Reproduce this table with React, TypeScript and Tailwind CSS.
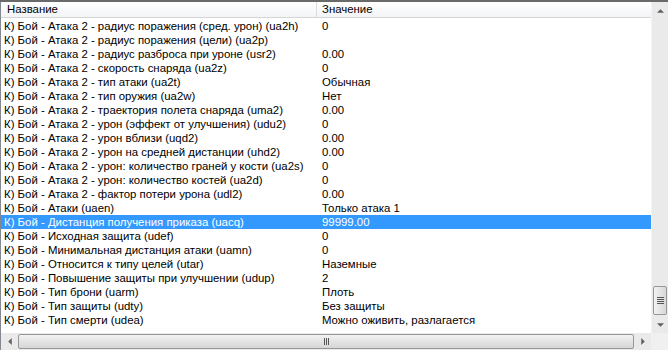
import React from "react";

interface Row {
  name: string;
  value: string;
}

const rows: Row[] = [
  { name: "К) Бой - Атака 2 - радиус поражения (сред. урон) (ua2h)", value: "0" },
  { name: "К) Бой - Атака 2 - радиус поражения (цели) (ua2p)", value: "" },
  { name: "К) Бой - Атака 2 - радиус разброса при уроне (usr2)", value: "0.00" },
  { name: "К) Бой - Атака 2 - скорость снаряда (ua2z)", value: "0" },
  { name: "К) Бой - Атака 2 - тип атаки (ua2t)", value: "Обычная" },
  { name: "К) Бой - Атака 2 - тип оружия (ua2w)", value: "Нет" },
  { name: "К) Бой - Атака 2 - траектория полета снаряда (uma2)", value: "0.00" },
  { name: "К) Бой - Атака 2 - урон (эффект от улучшения) (udu2)", value: "0" },
  { name: "К) Бой - Атака 2 - урон вблизи (uqd2)", value: "0.00" },
  { name: "К) Бой - Атака 2 - урон на средней дистанции (uhd2)", value: "0.00" },
  { name: "К) Бой - Атака 2 - урон: количество граней у кости (ua2s)", value: "0" },
  { name: "К) Бой - Атака 2 - урон: количество костей (ua2d)", value: "0" },
  { name: "К) Бой - Атака 2 - фактор потери урона (udl2)", value: "0.00" },
  { name: "К) Бой - Атаки (uaen)", value: "Только атака 1" },
  { name: "К) Бой - Дистанция получения приказа (uacq)", value: "99999.00" },
  { name: "К) Бой - Исходная защита (udef)", value: "0" },
  { name: "К) Бой - Минимальная дистанция атаки (uamn)", value: "0" },
  { name: "К) Бой - Относится к типу целей (utar)", value: "Наземные" },
  { name: "К) Бой - Повышение защиты при улучшении (udup)", value: "2" },
  { name: "К) Бой - Тип брони (uarm)", value: "Плоть" },
  { name: "К) Бой - Тип защиты (udty)", value: "Без защиты" },
  { name: "К) Бой - Тип смерти (udea)", value: "Можно оживить, разлагается" },
];

const SELECTED = 14;

const Arrow: React.FC<{ dir: "up" | "down" | "left" | "right" }> = ({ dir }) => {
  const pts = {
    up: "0,4 4,0 8,4",
    down: "0,0 4,4 8,0",
    left: "4,0 0,4 4,8",
    right: "0,0 4,4 0,8",
  }[dir];
  const vertical = dir === "up" || dir === "down";
  return (
    <svg width={vertical ? 7 : 4} height={vertical ? 4 : 7} viewBox={vertical ? "0 0 8 4" : "0 0 4 8"}>
      <polygon points={pts} fill="#606060" />
    </svg>
  );
};

export default function App() {
  return (
    <div
      className="w-[668px] h-[350px] flex flex-col bg-white overflow-hidden text-[11.4px] text-black"
      style={{ fontFamily: '"Liberation Sans", Arial, sans-serif' }}
    >
      <div className="flex flex-1 min-h-0 border-t-2 border-[#6a6a6a]">
        <div className="flex-1 flex flex-col border-l border-[#828790]">
          <div className="h-[16px] flex border-b border-[#d5d5d5] bg-gradient-to-b from-white to-[#f3f4f6]">
            <div className="w-[316px] pl-[6px] flex items-center border-r border-[#dcdcdc]">Название</div>
            <div className="flex-1 pl-[5px] flex items-center">Значение</div>
          </div>
          <div className="pt-[1px]">
            {rows.map((r, i) => (
              <div
                key={r.name}
                className={
                  i === SELECTED
                    ? "h-[14px] flex items-center bg-[#3399ff] text-white"
                    : "h-[14px] flex items-center"
                }
              >
                <div className="w-[317px] pl-[3px] whitespace-nowrap leading-[14px]">{r.name}</div>
                <div className="flex-1 pl-[4px] whitespace-nowrap leading-[14px]">{r.value}</div>
              </div>
            ))}
          </div>
        </div>
        <div className="w-[17px] flex flex-col bg-[#eaeaea] border-l border-[#f4f4f4]">
          <div className="h-[17px] flex items-center justify-center">
            <Arrow dir="up" />
          </div>
          <div className="flex-1 flex flex-col justify-end px-[1px] pb-[1px]">
            <div className="h-[29px] rounded-[2px] border border-[#979797] bg-gradient-to-r from-[#f2f2f2] to-[#d8d8d8] flex flex-col items-center justify-center gap-[1px]">
              <div className="w-[7px] h-[1px] bg-[#555]" />
              <div className="w-[7px] h-[1px] bg-[#555]" />
              <div className="w-[7px] h-[1px] bg-[#555]" />
              <div className="w-[7px] h-[1px] bg-[#555]" />
            </div>
          </div>
          <div className="h-[17px] flex items-center justify-center">
            <Arrow dir="down" />
          </div>
        </div>
      </div>
      <div className="h-[17px] flex border-l border-[#828790]">
        <div className="flex-1 flex bg-[#eaeaea]">
          <div className="w-[17px] flex items-center justify-center">
            <Arrow dir="left" />
          </div>
          <div className="flex-1 flex py-[1px]">
            <div className="w-[616px] rounded-[2px] border border-[#979797] bg-gradient-to-b from-[#f2f2f2] to-[#d6d6d6] flex items-center justify-center gap-[1px]">
              <div className="w-[1px] h-[7px] bg-[#555]" />
              <div className="w-[1px] h-[7px] bg-[#555]" />
              <div className="w-[1px] h-[7px] bg-[#555]" />
            </div>
          </div>
          <div className="w-[17px] flex items-center justify-center">
            <Arrow dir="right" />
          </div>
        </div>
        <div className="w-[17px] bg-[#f0f0f0]" />
      </div>
    </div>
  );
}
